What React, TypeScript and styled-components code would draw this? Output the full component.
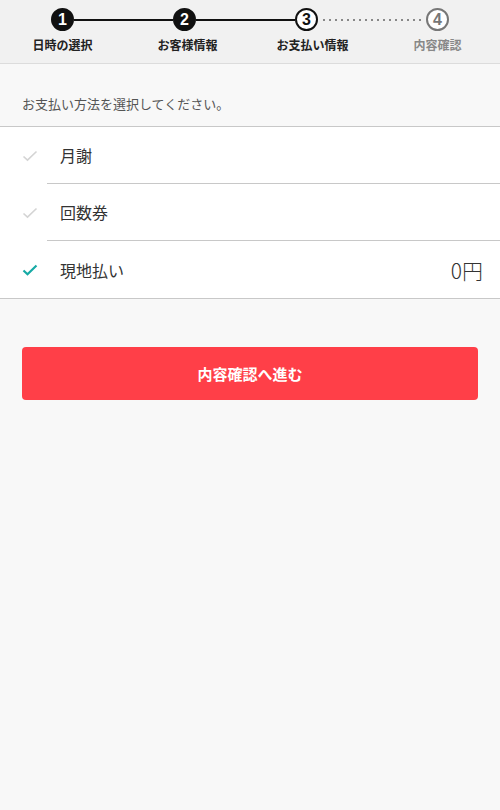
import styled, { createGlobalStyle } from 'styled-components';

const GlobalStyle = createGlobalStyle`
  html, body {
    margin: 0;
    padding: 0;
    background: #f8f8f8;
    font-family: "Noto Sans CJK JP", "Noto Sans", sans-serif;
  }
`;

const Page = styled.div`
  width: 500px;
  min-height: 810px;
  background: #f8f8f8;
`;

const Header = styled.div`
  background: #f1f1f1;
  border-bottom: 1px solid #dcdcdc;
  height: 64px;
  box-sizing: border-box;
  padding-top: 8px;
`;

const Track = styled.div`
  display: flex;
  align-items: center;
  padding: 0 51px;
`;

const Circle = styled.div<{ $state: 'done' | 'current' | 'todo' }>`
  width: 23px;
  height: 23px;
  box-sizing: border-box;
  border-radius: 50%;
  display: flex;
  align-items: center;
  justify-content: center;
  font-family: "Liberation Sans", Arial, sans-serif;
  font-weight: 700;
  font-size: 16px;
  flex: none;
  background: ${p => (p.$state === 'done' ? '#111' : '#fff')};
  color: ${p => (p.$state === 'done' ? '#fff' : p.$state === 'current' ? '#111' : '#777')};
  border: 2px solid ${p => (p.$state === 'todo' ? '#777' : '#111')};
`;

const Line = styled.div<{ $dotted?: boolean }>`
  flex: 1;
  height: 2px;
  background: ${p =>
    p.$dotted
      ? 'repeating-linear-gradient(to right, #888 0 2px, transparent 2px 6px)'
      : '#111'};
  margin: ${p => (p.$dotted ? '0 4px 0 5px' : '0')};
`;

const Labels = styled.div`
  display: grid;
  grid-template-columns: repeat(4, 1fr);
  margin-top: 5px;
`;

const Label = styled.div<{ $muted?: boolean }>`
  text-align: center;
  font-size: 12px;
  font-weight: 700;
  color: ${p => (p.$muted ? '#888' : '#222')};
`;

const Prompt = styled.div`
  padding: 30px 22px 12px;
  font-size: 13px;
  color: #555;
  line-height: 20px;
`;

const List = styled.div`
  background: #fff;
  border-top: 1px solid #c8c8c8;
  border-bottom: 1px solid #c8c8c8;
`;

const Row = styled.div`
  display: flex;
  align-items: center;
  height: 57px;
  padding-left: 22px;
`;

const Check = styled.div`
  width: 25px;
  flex: none;
  display: flex;
  align-items: center;
`;

const RowBody = styled.div<{ $divider?: boolean }>`
  flex: 1;
  height: 100%;
  display: flex;
  align-items: center;
  justify-content: space-between;
  padding: 0 17px 0 13px;
  border-bottom: ${p => (p.$divider ? '1px solid #c8c8c8' : 'none')};
  box-sizing: border-box;
`;

const RowText = styled.span`
  font-size: 16px;
  color: #333;
`;

const Price = styled.span`
  font-size: 21px;
  font-weight: 300;
  color: #333;
`;

const Actions = styled.div`
  padding: 48px 22px 0;
`;

const Button = styled.button`
  width: 100%;
  height: 53px;
  border: none;
  border-radius: 4px;
  background: #ff3f48;
  color: #fff;
  font-family: "Noto Sans CJK JP", sans-serif;
  font-size: 15px;
  font-weight: 700;
`;

const CheckIcon = ({ on }: { on?: boolean }) => (
  <svg width="16" height="12" viewBox="0 0 16 12">
    <path d="M1.5 6.5 L5.5 10.2 L14.5 1.5" fill="none" stroke={on ? '#16aaa5' : '#d4d4d4'} strokeWidth={on ? 2.2 : 1.6} />
  </svg>
);

const methods = [
  { name: '月謝' },
  { name: '回数券' },
  { name: '現地払い', price: '0円', selected: true },
];

const App = () => {
  return (
    <Page>
      <GlobalStyle />
      <Header>
        <Track>
          <Circle $state="done">1</Circle>
          <Line />
          <Circle $state="done">2</Circle>
          <Line />
          <Circle $state="current">3</Circle>
          <Line $dotted />
          <Circle $state="todo">4</Circle>
        </Track>
        <Labels>
          <Label>日時の選択</Label>
          <Label>お客様情報</Label>
          <Label>お支払い情報</Label>
          <Label $muted>内容確認</Label>
        </Labels>
      </Header>
      <Prompt>お支払い方法を選択してください。</Prompt>
      <List>
        {methods.map((m, i) => (
          <Row key={m.name}>
            <Check><CheckIcon on={m.selected} /></Check>
            <RowBody $divider={i < methods.length - 1}>
              <RowText>{m.name}</RowText>
              {m.price && <Price>{m.price}</Price>}
            </RowBody>
          </Row>
        ))}
      </List>
      <Actions>
        <Button>内容確認へ進む</Button>
      </Actions>
    </Page>
  );
};

export default App;
